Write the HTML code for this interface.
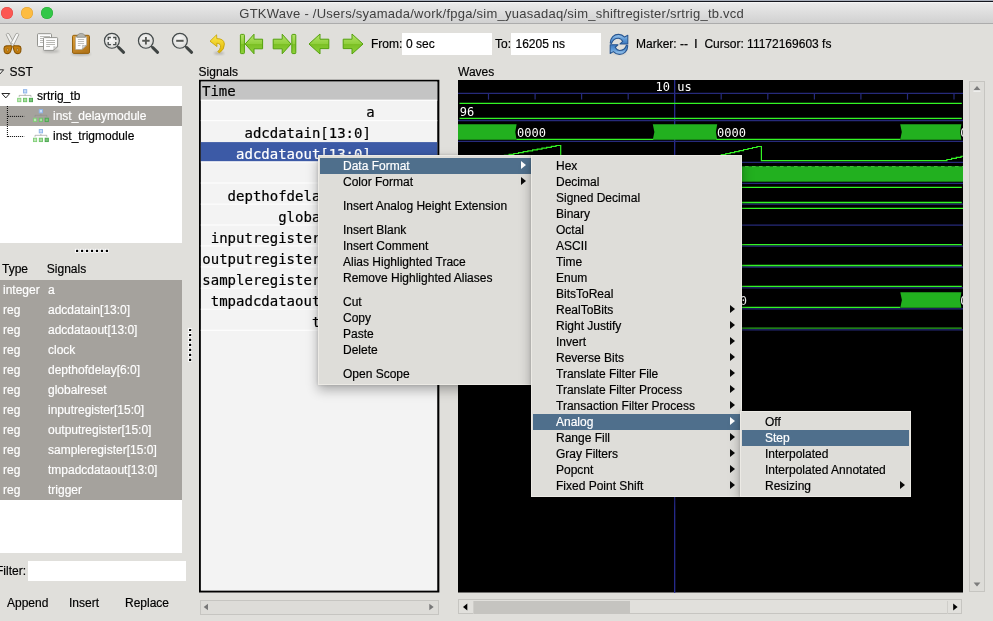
<!DOCTYPE html>
<html><head><meta charset="utf-8"><title>GTKWave</title>
<style>
html,body{margin:0;padding:0;}
body{width:993px;height:621px;overflow:hidden;background:#e0dfdb;position:relative;font-family:"Liberation Sans",sans-serif;font-size:12px;color:#000;}
.a{position:absolute;white-space:pre;}
#root{position:absolute;left:0;top:0;width:993px;height:621px;will-change:transform;}
.t{position:absolute;white-space:pre;line-height:16px;height:16px;-webkit-text-stroke:.18px currentColor;}
.m{font-family:"DejaVu Sans Mono","Liberation Mono",monospace;-webkit-text-stroke:0.2px currentColor;}
.w{color:#fff;}
.menu{position:absolute;background:#deddd9;box-sizing:border-box;border:1.5px solid #eceae5;border-right-width:1px;border-bottom-width:1px;box-shadow:0 5px 11px rgba(0,0,0,.30), 0 0 3px rgba(0,0,0,.16);}
.hl{position:absolute;background:#4f6f8c;}
.arr{position:absolute;width:0;height:0;border-top:4.7px solid transparent;border-bottom:4.7px solid transparent;border-left:5.4px solid #0a0a0a;}
.arr.w{border-left-color:#fff;}
</style></head><body><div id="root">

<div class="a" style="left:0;top:0;width:993px;height:24px;background:linear-gradient(to bottom,#a9afbb 0,#a9afbb .6px,#14161e .7px,#14161e 1.8px,#f7f7f7 1.9px,#f3f3f3 3px,#e9e9e9 3.6px,#d1d1d1 22.8px,#a9a9a9 22.9px,#adadad 23.7px,#e0dfdb 23.8px)"></div>
<div class="a" style="left:1px;top:6.8px;width:12px;height:12px;border-radius:50%;background:#fc5753;box-shadow:inset 0 0 0 .5px #df4744"></div>
<div class="a" style="left:21px;top:6.8px;width:12px;height:12px;border-radius:50%;background:#fdbc40;box-shadow:inset 0 0 0 .5px #de9f34"></div>
<div class="a" style="left:40.9px;top:6.8px;width:12px;height:12px;border-radius:50%;background:#33c748;box-shadow:inset 0 0 0 .5px #27aa35"></div>
<div class="a" style="left:239.3px;top:6px;font-size:13px;letter-spacing:.25px;line-height:16px;color:#404040">GTKWave - /Users/syamada/work/fpga/sim_yuasadaq/sim_shiftregister/srtrig_tb.vcd</div>
<!-- toolbar icons -->
<svg class="a" style="left:0;top:24px" width="640" height="40" viewBox="0 24 640 40">
<defs>
<linearGradient id="gg" x1="0" y1="0" x2="0" y2="1"><stop offset="0" stop-color="#b5e36b"/><stop offset=".5" stop-color="#8fcf3a"/><stop offset=".52" stop-color="#7cc025"/><stop offset="1" stop-color="#8ed23a"/></linearGradient>
<linearGradient id="yg" x1="0" y1="0" x2="0" y2="1"><stop offset="0" stop-color="#fce94f"/><stop offset="1" stop-color="#e0b400"/></linearGradient>
<linearGradient id="bg1" x1="0" y1="0" x2="0" y2="1"><stop offset="0" stop-color="#9fc8ee"/><stop offset=".5" stop-color="#5f9ad6"/><stop offset="1" stop-color="#3b78c0"/></linearGradient>
<linearGradient id="br" x1="0" y1="0" x2=".6" y2="1"><stop offset="0" stop-color="#dda03c"/><stop offset="1" stop-color="#b3761a"/></linearGradient>
<radialGradient id="lens" cx=".45" cy=".4" r=".6"><stop offset="0" stop-color="#fafafa"/><stop offset="1" stop-color="#d9d9d6"/></radialGradient>
<filter id="bl" x="-50%" y="-50%" width="200%" height="200%"><feGaussianBlur stdDeviation="1"/></filter>
</defs>
<!-- scissors -->
<g>
<path d="M6.1 34.5 Q7 32.8 8.9 33.6 L13.9 42.8 L11.5 45.4 Z" fill="#f1f1ef" stroke="#94948f" stroke-width=".8" stroke-linejoin="round"/>
<path d="M18.9 34.5 Q18 32.8 16.1 33.6 L11.1 42.8 L13.5 45.4 Z" fill="#f8f8f7" stroke="#94948f" stroke-width=".8" stroke-linejoin="round"/>
<path d="M11.3 45.6 L10.2 45.8 L6.2 45.9 Q4 46.4 4 48.6 L4.3 51.6 Q4.8 53.6 7 53.6 L8.6 53.4 Q10.3 52.8 10.9 50.6 L12.1 46.4 Z" fill="#c67f10" stroke="#8a5503" stroke-width="1.1" stroke-linejoin="round"/>
<path d="M13.7 45.6 L14.8 45.8 L18.8 45.9 Q21 46.4 21 48.6 L20.7 51.6 Q20.2 53.6 18 53.6 L16.4 53.4 Q14.7 52.8 14.1 50.6 L12.9 46.4 Z" fill="#c67f10" stroke="#8a5503" stroke-width="1.1" stroke-linejoin="round"/>
<path d="M6.9 48.6 L8.1 48.4 L8.3 51 L7 51.3 Z" fill="#e9d3a6" stroke="#8f5902" stroke-width=".6"/>
<path d="M18.1 48.6 L16.9 48.4 L16.7 51 L18 51.3 Z" fill="#e9d3a6" stroke="#8f5902" stroke-width=".6"/>
<circle cx="12.5" cy="44.8" r="1" fill="#fff" stroke="#9b9b97" stroke-width=".5"/>
</g>
<!-- copy -->
<g>
<ellipse cx="51" cy="51.2" rx="8.5" ry="1.5" fill="#000" opacity=".2" filter="url(#bl)"/>
<rect x="37.5" y="33.7" width="14" height="12.8" rx=".9" fill="#fcfcfc" stroke="#8a8a86" stroke-width=".9"/>
<path d="M40 36.5H50M40 38.5H50M40 40.5H50M40 42.5H50" stroke="#b4b4b0" stroke-width=".9"/>
<path d="M44.3 37.6 H56.8 Q57.6 37.6 57.6 38.4 V46.8 L53.4 50.4 H44.3 Q43.5 50.4 43.5 49.6 V38.4 Q43.5 37.6 44.3 37.6 Z" fill="#fdfdfd" stroke="#8a8a86" stroke-width=".9"/>
<path d="M46.2 40.5H55M46.2 42.5H55M46.2 44.5H55M46.2 46.5H50" stroke="#b0b0ac" stroke-width=".9"/>
<path d="M57.4 46.9 Q55 47.6 53.8 46.6 Q54.4 48.6 53.5 50.2 Z" fill="#e4e4e2" stroke="#8a8a86" stroke-width=".5" stroke-linejoin="round"/>
</g>
<!-- paste -->
<g>
<ellipse cx="81" cy="54" rx="10" ry="1.5" fill="#000" opacity=".22" filter="url(#bl)"/>
<rect x="72.5" y="35.3" width="17" height="18.1" rx="1.3" fill="url(#br)" stroke="#8f5902" stroke-width=".9"/>
<path d="M75.5 36.8 H86.6 V45.2 L81.9 49.5 H75.5 Z" fill="#fdfdfd" stroke="#9a9c98" stroke-width=".5"/>
<path d="M77.9 39.5H84.1M77.9 41.5H84.1M77.9 43.5H84.1M77.9 45.5H80.5" stroke="#b8b8b4" stroke-width=".9"/>
<path d="M86.5 45.3 Q84 46.2 82.6 45.2 Q83.2 47.6 82 49.4 Z" fill="#e0e0de" stroke="#8a8a86" stroke-width=".5" stroke-linejoin="round"/>
<path d="M76.8 37.3 V36 Q76.8 35.2 77.9 34.9 Q78.6 33.4 81.1 33.4 Q83.6 33.4 84.3 34.9 Q85.4 35.2 85.4 36 V37.3 Z" fill="#b4b4ad" stroke="#74766f" stroke-width=".6"/>
</g>
<!-- zoom fit / in / out -->
<g stroke-linecap="round">
<path d="M116.9 45.9 L118.9 47.9" stroke="#474c4b" stroke-width="1.4"/>
<path d="M118.8 47.7 L123.6 52.3" stroke="#3f4443" stroke-width="3"/>
<circle cx="111.9" cy="40.8" r="7.45" fill="url(#lens)" stroke="#444a4b" stroke-width="1.2"/>
<path d="M108.2 40V37.5H110.9M113.1 37.5H115.8V40M115.8 42.1V44.6H113.1M110.9 44.6H108.2V42.1" fill="none" stroke="#474c4b" stroke-width="1.3" stroke-linecap="butt"/>
<path d="M150.9 45.9 L152.9 47.9" stroke="#474c4b" stroke-width="1.4"/>
<path d="M152.8 47.7 L157.6 52.3" stroke="#3f4443" stroke-width="3"/>
<circle cx="145.9" cy="40.8" r="7.45" fill="url(#lens)" stroke="#444a4b" stroke-width="1.2"/>
<path d="M142.2 40.8H149.6M145.9 37.1V44.5" stroke="#555753" stroke-width="1.9" stroke-linecap="butt"/>
<path d="M184.9 45.9 L186.9 47.9" stroke="#474c4b" stroke-width="1.4"/>
<path d="M186.8 47.7 L191.6 52.3" stroke="#3f4443" stroke-width="3"/>
<circle cx="179.9" cy="40.8" r="7.45" fill="url(#lens)" stroke="#444a4b" stroke-width="1.2"/>
<path d="M176.2 40.8H183.6" stroke="#555753" stroke-width="2" stroke-linecap="butt"/>
</g>
<!-- undo -->
<g>
<ellipse cx="219" cy="53.2" rx="5" ry="1.2" fill="#000" opacity=".22" filter="url(#bl)"/>
<path d="M216.6 34.8 L210 41.2 L217 46.6 L216.8 43.2 Q221.4 43.6 220.4 47.4 Q219.8 49.8 217.8 51.6 Q218.6 52.8 219.6 52.8 Q224.6 49.4 224.4 44 Q224 38.6 216.8 38.6 Z" fill="url(#yg)" stroke="#c4a000" stroke-width=".8" stroke-linejoin="round"/>
</g>
<!-- goto first -->
<g stroke="#53a00c" stroke-width="1" stroke-linejoin="round">
<rect x="240.4" y="34.4" width="4" height="19.2" rx=".8" fill="url(#gg)"/>
<path d="M245.2 44 L254 34.2 V39.2 H262.6 V48.8 H254 V53.8 Z" fill="url(#gg)"/>
<!-- goto last -->
<rect x="291.8" y="34.4" width="4" height="19.2" rx=".8" fill="url(#gg)"/>
<path d="M291 44 L282.2 34.2 V39.2 H273.2 V48.8 H282.2 V53.8 Z" fill="url(#gg)"/>
<!-- back -->
<path d="M309 44 L320 34 V39.2 H328.8 V48.6 H320 V54 Z" fill="url(#gg)"/>
<!-- forward -->
<path d="M363 44 L352 34 V39.2 H343.2 V48.6 H352 V54 Z" fill="url(#gg)"/>
</g>
<!-- refresh -->
<ellipse cx="619" cy="53.2" rx="7" ry="1.1" fill="#000" opacity=".15" filter="url(#bl)"/>
<g stroke="#28558f" stroke-width="1.05" stroke-linejoin="round" fill="url(#bg1)" transform="translate(0 .45)">
<path id="rfa" d="M610.2 42.6 C610.4 37.2 614 33.9 618.6 33.9 C621 33.9 623 34.9 624.6 36.6 L627.8 34.8 L627.8 43.5 L620 43.5 L622.8 41 C621.6 38.8 620.2 37.7 618.4 37.7 C615.2 37.7 612.6 39.6 611.6 43 Z"/>
<path d="M610.2 42.6 C610.4 37.2 614 33.9 618.6 33.9 C621 33.9 623 34.9 624.6 36.6 L627.8 34.8 L627.8 43.5 L620 43.5 L622.8 41 C621.6 38.8 620.2 37.7 618.4 37.7 C615.2 37.7 612.6 39.6 611.6 43 Z" transform="rotate(180 619 43.9)"/>
</g>
</svg>

<div class="t" style="left:371px;top:36px">From:</div>
<div class="a" style="left:402px;top:33px;width:90px;height:22px;background:#fff"></div>
<div class="t" style="left:406px;top:36px">0 sec</div>
<div class="t" style="left:495px;top:36px">To:</div>
<div class="a" style="left:511px;top:33px;width:90px;height:22px;background:#fff"></div>
<div class="t" style="left:515.5px;top:36px">16205 ns</div>
<div class="t" style="left:636px;top:36px">Marker: --  <span style="display:inline-block;width:3.1px;text-align:center;font-size:9.6px;font-weight:bold;position:relative;top:-1.7px;left:-.3px">|</span>  Cursor: 11172169603 fs</div>
<div class="t" style="left:9.6px;top:64px">SST</div>
<div class="a" style="left:0;top:86px;width:182px;height:157px;background:#fff"></div>
<div class="a" style="left:0;top:106px;width:182px;height:20px;background:#a5a29d"></div>
<div class="t" style="left:37px;top:88px">srtrig_tb</div>
<div class="t w" style="left:53px;top:108px">inst_delaymodule</div>
<div class="t" style="left:53px;top:128px">inst_trigmodule</div>
<!-- sst icons -->
<svg class="a" style="left:0;top:60px" width="60" height="90" viewBox="0 60 60 90">
<defs><g id="mod">
<rect x="6.35" y="0.45" width="3.3" height="3.3" fill="#c9dcf6" stroke="#8ab3ea" stroke-width=".9"/>
<path d="M2.1 7.7V6.2H13.9V7.7M8 4.9V6.2" fill="none" stroke="#8c8d8b" stroke-width=".6"/>
<rect x=".55" y="9.1" width="3.2" height="3.4" fill="#bfe6b9" stroke="#80cf77" stroke-width=".9"/>
<rect x="6.4" y="9.1" width="3.2" height="3.4" fill="#a9dca2" stroke="#6cc465" stroke-width=".9"/>
<rect x="12.25" y="9.1" width="3.2" height="3.4" fill="#7cc47a" stroke="#48a64e" stroke-width=".9"/>
</g></defs>
<path d="M-3.5 69.8 H3.6 L0 73.9 Z" fill="#f4f4f2" stroke="#111" stroke-width=".9" stroke-linejoin="round"/>
<path d="M1.9 93.5 H9.7 L5.8 97.9 Z" fill="#fff" stroke="#111" stroke-width=".9" stroke-linejoin="round"/>
<use href="#mod" x="17.1" y="89.2"/>
<use href="#mod" x="32.9" y="109.1"/>
<use href="#mod" x="32.9" y="129.1"/>
<path d="M7.4 106V137" stroke="#000" stroke-width="1" stroke-dasharray="1 1"/>
<path d="M7.9 116.4H24.2M7.9 136.5H24.2" stroke="#000" stroke-width="1" stroke-dasharray="1 1"/>
</svg>
<!-- pane handles -->
<svg class="a" style="left:70px;top:244px" width="130" height="130" viewBox="70 244 130 130">
<rect x="74.90" y="248.80" width="3.9" height="3.9" fill="#fff" opacity=".9"/><rect x="76.00" y="249.80" width="2.2" height="2.2" rx=".6" fill="#000"/>
<rect x="79.87" y="248.80" width="3.9" height="3.9" fill="#fff" opacity=".9"/><rect x="80.97" y="249.80" width="2.2" height="2.2" rx=".6" fill="#000"/>
<rect x="84.84" y="248.80" width="3.9" height="3.9" fill="#fff" opacity=".9"/><rect x="85.94" y="249.80" width="2.2" height="2.2" rx=".6" fill="#000"/>
<rect x="89.81" y="248.80" width="3.9" height="3.9" fill="#fff" opacity=".9"/><rect x="90.91" y="249.80" width="2.2" height="2.2" rx=".6" fill="#000"/>
<rect x="94.78" y="248.80" width="3.9" height="3.9" fill="#fff" opacity=".9"/><rect x="95.88" y="249.80" width="2.2" height="2.2" rx=".6" fill="#000"/>
<rect x="99.75" y="248.80" width="3.9" height="3.9" fill="#fff" opacity=".9"/><rect x="100.85" y="249.80" width="2.2" height="2.2" rx=".6" fill="#000"/>
<rect x="104.72" y="248.80" width="3.9" height="3.9" fill="#fff" opacity=".9"/><rect x="105.82" y="249.80" width="2.2" height="2.2" rx=".6" fill="#000"/>
<rect x="187.90" y="327.90" width="3.9" height="3.9" fill="#fff" opacity=".9"/><rect x="189.00" y="328.90" width="2.2" height="2.2" rx=".6" fill="#000"/>
<rect x="187.90" y="332.88" width="3.9" height="3.9" fill="#fff" opacity=".9"/><rect x="189.00" y="333.88" width="2.2" height="2.2" rx=".6" fill="#000"/>
<rect x="187.90" y="337.86" width="3.9" height="3.9" fill="#fff" opacity=".9"/><rect x="189.00" y="338.86" width="2.2" height="2.2" rx=".6" fill="#000"/>
<rect x="187.90" y="342.84" width="3.9" height="3.9" fill="#fff" opacity=".9"/><rect x="189.00" y="343.84" width="2.2" height="2.2" rx=".6" fill="#000"/>
<rect x="187.90" y="347.82" width="3.9" height="3.9" fill="#fff" opacity=".9"/><rect x="189.00" y="348.82" width="2.2" height="2.2" rx=".6" fill="#000"/>
<rect x="187.90" y="352.80" width="3.9" height="3.9" fill="#fff" opacity=".9"/><rect x="189.00" y="353.80" width="2.2" height="2.2" rx=".6" fill="#000"/>
<rect x="187.90" y="357.78" width="3.9" height="3.9" fill="#fff" opacity=".9"/><rect x="189.00" y="358.78" width="2.2" height="2.2" rx=".6" fill="#000"/>
</svg>

<div class="t" style="left:2px;top:261px">Type</div>
<div class="t" style="left:46.8px;top:261px">Signals</div>
<div class="a" style="left:0;top:280px;width:182px;height:272.7px;background:#fff"></div>
<div class="a" style="left:0;top:280px;width:182px;height:219.5px;background:#a5a29d"></div>
<div class="t w" style="left:3px;top:282px">integer</div>
<div class="t w" style="left:48px;top:282px">a</div>
<div class="t w" style="left:3px;top:302px">reg</div>
<div class="t w" style="left:48px;top:302px">adcdatain[13:0]</div>
<div class="t w" style="left:3px;top:322px">reg</div>
<div class="t w" style="left:48px;top:322px">adcdataout[13:0]</div>
<div class="t w" style="left:3px;top:342px">reg</div>
<div class="t w" style="left:48px;top:342px">clock</div>
<div class="t w" style="left:3px;top:362px">reg</div>
<div class="t w" style="left:48px;top:362px">depthofdelay[6:0]</div>
<div class="t w" style="left:3px;top:382px">reg</div>
<div class="t w" style="left:48px;top:382px">globalreset</div>
<div class="t w" style="left:3px;top:402px">reg</div>
<div class="t w" style="left:48px;top:402px">inputregister[15:0]</div>
<div class="t w" style="left:3px;top:422px">reg</div>
<div class="t w" style="left:48px;top:422px">outputregister[15:0]</div>
<div class="t w" style="left:3px;top:442px">reg</div>
<div class="t w" style="left:48px;top:442px">sampleregister[15:0]</div>
<div class="t w" style="left:3px;top:462px">reg</div>
<div class="t w" style="left:48px;top:462px">tmpadcdataout[13:0]</div>
<div class="t w" style="left:3px;top:482px">reg</div>
<div class="t w" style="left:48px;top:482px">trigger</div>
<div class="t" style="left:-4px;top:563px">Filter:</div>
<div class="a" style="left:28px;top:561px;width:158px;height:20px;background:#fff"></div>
<div class="t" style="left:7px;top:595px">Append</div>
<div class="t" style="left:69px;top:595px">Insert</div>
<div class="t" style="left:125px;top:595px">Replace</div>
<div class="t" style="left:198.6px;top:64px">Signals</div>
<svg class="a" style="left:198px;top:78px" width="244" height="517" viewBox="198 78 244 517"><rect x="199" y="79.8" width="240.35" height="512.7" fill="#000"/><rect x="200.85" y="81.65" width="236.4" height="509" fill="#f3f3f3"/><rect x="200.85" y="81.65" width="236.4" height="18.2" fill="#c4c4c4"/><rect x="200.85" y="142.1" width="236.4" height="19.3" fill="#3c5aa6"/><rect x="200.85" y="99.75" width="236.4" height="1.15" fill="#fdfdfd"/><rect x="200.85" y="120.05" width="236.4" height="1.15" fill="#fdfdfd"/><rect x="200.85" y="161.45" width="236.4" height="1.15" fill="#fdfdfd"/><rect x="200.85" y="182.45" width="236.4" height="1.15" fill="#fdfdfd"/><rect x="200.85" y="203.55" width="236.4" height="1.15" fill="#fdfdfd"/><rect x="200.85" y="224.45" width="236.4" height="1.15" fill="#fdfdfd"/><rect x="200.85" y="245.35" width="236.4" height="1.15" fill="#fdfdfd"/><rect x="200.85" y="266.25" width="236.4" height="1.15" fill="#fdfdfd"/><rect x="200.85" y="287.65" width="236.4" height="1.15" fill="#fdfdfd"/><rect x="200.85" y="308.65" width="236.4" height="1.15" fill="#fdfdfd"/><rect x="200.85" y="329.75" width="236.4" height="1.15" fill="#fdfdfd"/></svg>
<div class="a m" style="left:202px;top:83px;font-size:14px;line-height:17px">Time</div>
<div class="a m" style="right:618.4px;top:103.9px;font-size:14px;line-height:17px">a</div>
<div class="a m" style="right:622.1px;top:124.9px;font-size:14px;line-height:17px">adcdatain[13:0]</div>
<div class="a m w" style="right:622.1px;top:145.9px;font-size:14px;line-height:17px">adcdataout[13:0]</div>
<div class="a m" style="right:622.1px;top:167.0px;font-size:14px;line-height:17px">clock</div>
<div class="a m" style="right:622.1px;top:188.0px;font-size:14px;line-height:17px">depthofdelay[6:0]</div>
<div class="a m" style="right:622.1px;top:209.0px;font-size:14px;line-height:17px">globalreset</div>
<div class="a m" style="right:622.1px;top:230.1px;font-size:14px;line-height:17px">inputregister[15:0]</div>
<div class="a m" style="right:622.1px;top:251.1px;font-size:14px;line-height:17px">outputregister[15:0]</div>
<div class="a m" style="right:622.1px;top:272.1px;font-size:14px;line-height:17px">sampleregister[15:0]</div>
<div class="a m" style="right:622.1px;top:293.1px;font-size:14px;line-height:17px">tmpadcdataout[13:0]</div>
<div class="a m" style="right:622.1px;top:314.2px;font-size:14px;line-height:17px">trigger</div>
<div class="t" style="left:458px;top:64px">Waves</div>
<svg class="a" style="left:458px;top:80px" width="505" height="513" viewBox="458 80 505 513" font-family="'DejaVu Sans Mono','Liberation Mono',monospace" font-size="12">
<rect x="458" y="80" width="505" height="512.5" fill="#000"/>
<path d="M674.7 80V593" stroke="#2b2f9c" stroke-width="1.2"/>
<path d="M458 93.4H963" stroke="#262a7a" stroke-width="1.3"/>
<path d="M458 120.5H963" stroke="#262a7a" stroke-width="1.3"/>
<path d="M458 141.4H963" stroke="#262a7a" stroke-width="1.3"/>
<path d="M458 162.4H963" stroke="#262a7a" stroke-width="1.3"/>
<path d="M458 183.3H963" stroke="#262a7a" stroke-width="1.3"/>
<path d="M458 204.2H963" stroke="#262a7a" stroke-width="1.3"/>
<path d="M458 225.2H963" stroke="#262a7a" stroke-width="1.3"/>
<path d="M458 246.1H963" stroke="#262a7a" stroke-width="1.3"/>
<path d="M458 267.0H963" stroke="#262a7a" stroke-width="1.3"/>
<path d="M458 287.9H963" stroke="#262a7a" stroke-width="1.3"/>
<path d="M458 308.9H963" stroke="#262a7a" stroke-width="1.3"/>
<path d="M458 329.8H963" stroke="#262a7a" stroke-width="1.3"/>
<path d="M488.5 93.4V99.6" stroke="#262a7a" stroke-width="1.2"/>
<path d="M535.1 93.4V99.6" stroke="#262a7a" stroke-width="1.2"/>
<path d="M581.6 93.4V99.6" stroke="#262a7a" stroke-width="1.2"/>
<path d="M628.2 93.4V99.6" stroke="#262a7a" stroke-width="1.2"/>
<path d="M721.2 93.4V99.6" stroke="#262a7a" stroke-width="1.2"/>
<path d="M767.8 93.4V99.6" stroke="#262a7a" stroke-width="1.2"/>
<path d="M814.4 93.4V99.6" stroke="#262a7a" stroke-width="1.2"/>
<path d="M860.9 93.4V99.6" stroke="#262a7a" stroke-width="1.2"/>
<path d="M907.5 93.4V99.6" stroke="#262a7a" stroke-width="1.2"/>
<path d="M954.0 93.4V99.6" stroke="#262a7a" stroke-width="1.2"/>
<text x="655.6" y="91" fill="#fff">10 us</text>
<path d="M459.5 103.3H961.8" stroke="#33f524" stroke-width="1.3"/>
<path d="M459.5 118.4H961.8" stroke="#33f524" stroke-width="1.3"/>
<text x="459.8" y="116" fill="#fff">96</text>
<path d="M458.0 124.2 L516.6 124.2 L515.3 132.0 L516.6 139.8 L458.0 139.8Z" fill="#22b01f"/>
<path d="M652.8 124.2 L717.2 124.2 L715.9 132.0 L717.2 139.8 L652.8 139.8 L654.4 132.0Z" fill="#22b01f"/>
<path d="M900.2 124.2 L961.4 124.2 L960.1 132.0 L961.4 139.8 L900.2 139.8 L901.8 132.0Z" fill="#22b01f"/>
<path d="M516.4 139.4H653.2" stroke="#33f524" stroke-width="1.3"/>
<path d="M716.4 139.4H900.3" stroke="#33f524" stroke-width="1.3"/>
<text x="517.0" y="137.1" fill="#fff">0000</text>
<text x="717.0" y="137.1" fill="#fff">0000</text>
<text x="960.3" y="137.2" fill="#fff">0</text>
<path d="M458 160.6 H481 L481.0 160.6V159.71H485.69V158.82H490.38V157.94H495.06V157.05H499.75V156.16H504.44V155.27H509.13V154.38H513.82V153.49H518.51V152.61H523.19V151.72H527.88V150.83H532.57V149.94H537.26V149.05H541.95V148.16H546.64V147.28H551.32V146.39H556.01V145.50H560.70 V160.6 H699 L699.0 160.6V159.59H703.46V158.59H707.91V157.58H712.37V156.57H716.83V155.56H721.29V154.56H725.74V153.55H730.20V152.54H734.66V151.54H739.11V150.53H743.57V149.52H748.03V148.51H752.49V147.51H756.94V146.50H761.40 V160.6 H946.9 L946.9 160.6V159.52H951.60V158.43H956.30V157.35H961.00V156.26H965.70V155.18H970.40V154.09H975.10V153.01H979.80V151.92H984.50V150.84H989.20V149.75H993.90V148.67H998.60V147.58H1003.30V146.50H1008.00" fill="none" stroke="#33f524" stroke-width="1.2"/>
<rect x="458" y="166.3" width="505" height="15.4" fill="#22b01f"/>
<path d="M458 166.6H963" stroke="#4fd548" stroke-width="0.8" stroke-dasharray="3.6 3.4"/>
<path d="M458 181.5H963" stroke="#167814" stroke-width="0.8" stroke-dasharray="3.6 3.4"/>
<path d="M458 187.4H961.8" stroke="#33f524" stroke-width="1.3"/>
<path d="M458 202.5H961.8" stroke="#33f524" stroke-width="1.3"/>
<path d="M458 208.3H963" stroke="#33f524" stroke-width="1.3"/>
<path d="M458 244.6H961.8" stroke="#33f524" stroke-width="1.3"/>
<path d="M458 265.5H961.8" stroke="#33f524" stroke-width="1.3"/>
<path d="M458 286.4H961.8" stroke="#33f524" stroke-width="1.3"/>
<path d="M458 307.4H900.3" stroke="#33f524" stroke-width="1.3"/>
<path d="M900.3 292.2 L961.4 292.2 L960.1 299.9 L961.4 307.7 L900.3 307.7 L901.9 299.9Z" fill="#22b01f"/>
<text x="718.0" y="305" fill="#fff">0000</text>
<text x="960.3" y="305" fill="#fff">0</text>
<path d="M458 328.2H961.8" stroke="#2aa81f" stroke-width="1.2"/>
</svg>
<!-- scrollbars -->
<div class="a" style="left:199.5px;top:599.5px;width:239px;height:15px;box-sizing:border-box;border:1px solid #c6c5c1;background:#dddcd8"></div>
<svg class="a" style="left:199px;top:599px" width="242" height="16" viewBox="0 0 242 16"><path d="M9 4.7 L4.7 8 L9 11.3Z" fill="#777"/><path d="M230.3 4.7 L234.7 8 L230.3 11.3Z" fill="#777"/></svg>
<div class="a" style="left:458.2px;top:599.3px;width:504.3px;height:15.2px;box-sizing:border-box;border:1px solid #c6c5c1;background:#e1e0dc"></div>
<div class="a" style="left:473px;top:600.5px;width:157px;height:13px;background:#c5c4c0"></div>
<div class="a" style="left:472.5px;top:600.5px;width:1px;height:13px;background:#cfcecA"></div>
<div class="a" style="left:947px;top:600.5px;width:1px;height:13px;background:#cfceca"></div>
<svg class="a" style="left:458px;top:599px" width="506" height="16" viewBox="0 0 506 16"><path d="M9.3 4.6 L5 8 L9.3 11.4Z" fill="#000"/><path d="M495.2 4.6 L499.6 8 L495.2 11.4Z" fill="#000"/></svg>
<div class="a" style="left:969px;top:81px;width:16px;height:510.5px;box-sizing:border-box;border:1px solid #c6c5c1;background:#dddcd8"></div>
<svg class="a" style="left:969px;top:81px" width="16" height="511" viewBox="0 0 16 511"><path d="M4.4 9.3 L8 5 L11.6 9.3Z" fill="#7c7c7c"/><path d="M4.4 10 L11.6 10" stroke="#fff" stroke-width="1"/><path d="M4.6 501.5 L8 505.6 L11.4 501.5Z" fill="#7c7c7c"/></svg>

<div class="menu" style="left:317.8px;top:154.9px;width:215px;height:229.8px"></div>
<div class="hl" style="left:319.9px;top:158.2px;width:211.1px;height:15.4px"></div>
<div class="t w" style="left:343px;top:158.0px">Data Format</div>
<div class="arr w" style="left:521.3px;top:161.2px"></div>
<div class="t" style="left:343px;top:174.0px">Color Format</div>
<div class="arr" style="left:521.3px;top:177.2px"></div>
<div class="t" style="left:343px;top:198.0px">Insert Analog Height Extension</div>
<div class="t" style="left:343px;top:222.0px">Insert Blank</div>
<div class="t" style="left:343px;top:238.0px">Insert Comment</div>
<div class="t" style="left:343px;top:254.0px">Alias Highlighted Trace</div>
<div class="t" style="left:343px;top:270.0px">Remove Highlighted Aliases</div>
<div class="t" style="left:343px;top:294.0px">Cut</div>
<div class="t" style="left:343px;top:310.0px">Copy</div>
<div class="t" style="left:343px;top:326.0px">Paste</div>
<div class="t" style="left:343px;top:342.0px">Delete</div>
<div class="t" style="left:343px;top:366.0px">Open Scope</div>
<div class="menu" style="left:531px;top:155px;width:211px;height:342.1px"></div>
<div class="t" style="left:556px;top:158.0px">Hex</div>
<div class="t" style="left:556px;top:174.0px">Decimal</div>
<div class="t" style="left:556px;top:190.0px">Signed Decimal</div>
<div class="t" style="left:556px;top:206.0px">Binary</div>
<div class="t" style="left:556px;top:222.0px">Octal</div>
<div class="t" style="left:556px;top:238.0px">ASCII</div>
<div class="t" style="left:556px;top:254.0px">Time</div>
<div class="t" style="left:556px;top:270.0px">Enum</div>
<div class="t" style="left:556px;top:286.0px">BitsToReal</div>
<div class="t" style="left:556px;top:302.0px">RealToBits</div>
<div class="arr" style="left:729.9px;top:305.2px"></div>
<div class="t" style="left:556px;top:318.0px">Right Justify</div>
<div class="arr" style="left:729.9px;top:321.2px"></div>
<div class="t" style="left:556px;top:334.0px">Invert</div>
<div class="arr" style="left:729.9px;top:337.2px"></div>
<div class="t" style="left:556px;top:350.0px">Reverse Bits</div>
<div class="arr" style="left:729.9px;top:353.2px"></div>
<div class="t" style="left:556px;top:366.0px">Translate Filter File</div>
<div class="arr" style="left:729.9px;top:369.2px"></div>
<div class="t" style="left:556px;top:382.0px">Translate Filter Process</div>
<div class="arr" style="left:729.9px;top:385.2px"></div>
<div class="t" style="left:556px;top:398.0px">Transaction Filter Process</div>
<div class="arr" style="left:729.9px;top:401.2px"></div>
<div class="hl" style="left:533.1px;top:414.2px;width:207.1px;height:15.4px"></div>
<div class="t w" style="left:556px;top:414.0px">Analog</div>
<div class="arr w" style="left:729.9px;top:417.2px"></div>
<div class="t" style="left:556px;top:430.0px">Range Fill</div>
<div class="arr" style="left:729.9px;top:433.2px"></div>
<div class="t" style="left:556px;top:446.0px">Gray Filters</div>
<div class="arr" style="left:729.9px;top:449.2px"></div>
<div class="t" style="left:556px;top:462.0px">Popcnt</div>
<div class="arr" style="left:729.9px;top:465.2px"></div>
<div class="t" style="left:556px;top:478.0px">Fixed Point Shift</div>
<div class="arr" style="left:729.9px;top:481.2px"></div>
<div class="menu" style="left:739.8px;top:410.8px;width:171.2px;height:86.4px"></div>
<div class="t" style="left:765px;top:414.0px">Off</div>
<div class="hl" style="left:741.9px;top:430.2px;width:167.3px;height:15.4px"></div>
<div class="t w" style="left:765px;top:430.0px">Step</div>
<div class="t" style="left:765px;top:446.0px">Interpolated</div>
<div class="t" style="left:765px;top:462.0px">Interpolated Annotated</div>
<div class="t" style="left:765px;top:478.0px">Resizing</div>
<div class="arr" style="left:899.5px;top:481.2px"></div>
</div></body></html>
